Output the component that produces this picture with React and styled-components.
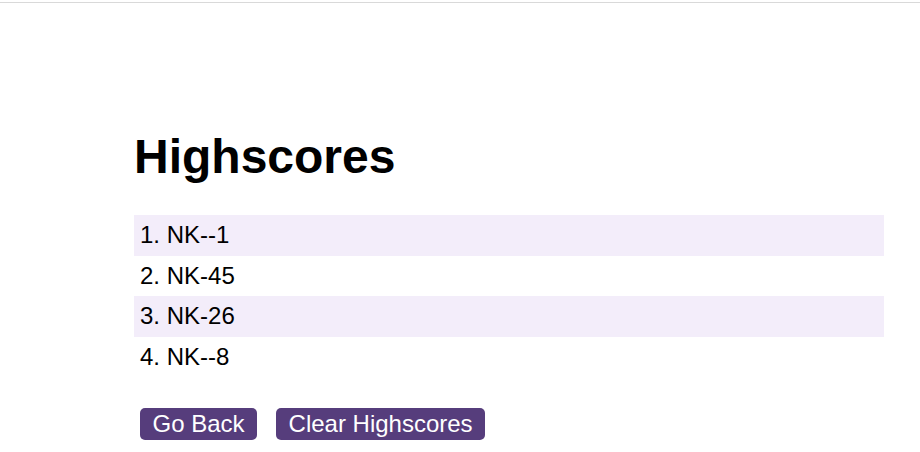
import React from 'react';
import styled, { createGlobalStyle } from 'styled-components';

const GlobalStyle = createGlobalStyle`
  body {
    margin: 0;
    background: #fff;
    font-family: "Liberation Sans", Arial, sans-serif;
    color: #000;
  }
`;

const TopBar = styled.header`
  height: 2px;
  border-bottom: 1px solid #d9d9d9;
`;

const Main = styled.main`
  padding: 0 36px 0 134px;
`;

const Title = styled.h1`
  margin: 126px 0 0;
  font-size: 48px;
  font-weight: bold;
  line-height: 1.15;
`;

const ScoreList = styled.ol`
  list-style: none;
  margin: 31px 0 0;
  padding: 0;
`;

const ScoreRow = styled.li`
  height: 40.5px;
  display: flex;
  align-items: center;
  padding-left: 6px;
  font-size: 24px;
  background: ${(p) => (p.$odd ? '#f3edfa' : 'transparent')};
`;

const Actions = styled.div`
  display: flex;
  gap: 19px;
  margin: 31px 0 0 6px;
`;

const ActionButton = styled.button`
  height: 32px;
  padding: 0 12.5px;
  border: none;
  border-radius: 5px;
  background: #563d7c;
  color: #fff;
  font-family: "Liberation Sans", Arial, sans-serif;
  font-size: 24px;
  cursor: pointer;
`;

const scores = ['NK--1', 'NK-45', 'NK-26', 'NK--8'];

export default function App() {
  return (
    <>
      <GlobalStyle />
      <TopBar />
      <Main>
        <Title>Highscores</Title>
        <ScoreList>
          {scores.map((s, i) => (
            <ScoreRow key={i} $odd={i % 2 === 0}>
              {i + 1}. {s}
            </ScoreRow>
          ))}
        </ScoreList>
        <Actions>
          <ActionButton>Go Back</ActionButton>
          <ActionButton>Clear Highscores</ActionButton>
        </Actions>
      </Main>
    </>
  );
}
